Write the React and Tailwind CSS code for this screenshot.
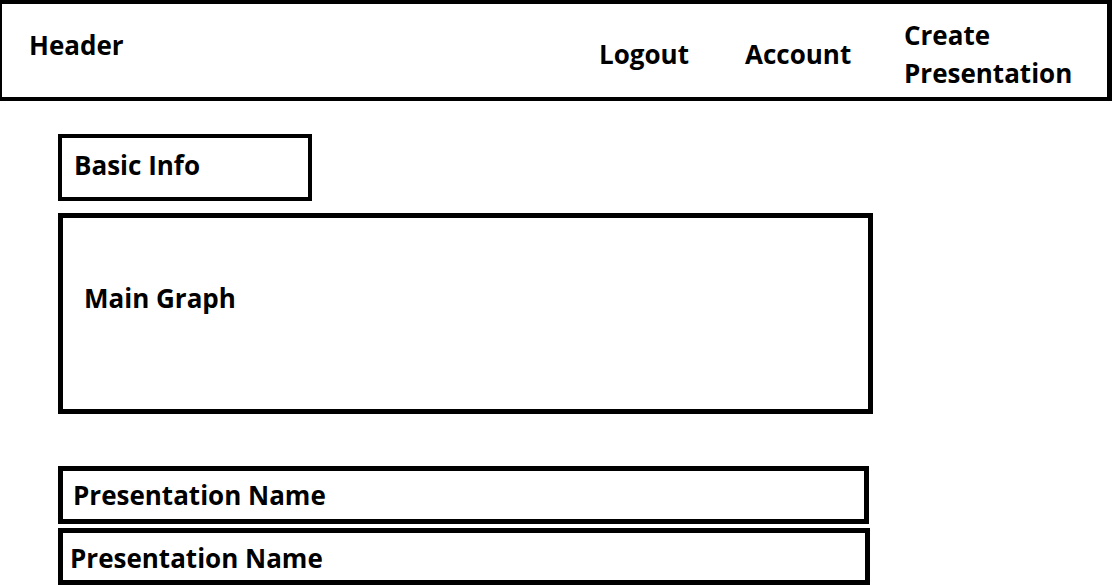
export default function App() {
  return (
    <div className="w-[1113px] h-[585px] overflow-hidden bg-white text-black font-bold text-[26px] leading-[38px] font-['Open_Sans',sans-serif]">
      {/* top bar */}
      <header className="flex items-start w-[1112px] h-[101px] border-[4px] border-l-[2px] border-r-[5px] border-black">
        <div className="w-[597px] pl-[27px] mt-[22px]">Header</div>
        <div className="w-[146px] mt-[31px]">Logout</div>
        <div className="w-[159px] mt-[31px]">Account</div>
        <div className="mt-[12px]">
          <div>Create</div>
          <div>Presentation</div>
        </div>
      </header>

      <main className="flex flex-col pl-[58px] pt-[33px]">
        <div className="w-[254px] h-[67px] border-[4px] border-black pl-[12px] pt-[8px]">Basic Info</div>

        <div className="mt-[12px] w-[815px] h-[201px] border-[5px] border-black pl-[21px] pt-[61px]">Main Graph</div>

        <div className="mt-[52px] w-[811px] h-[58px] border-[5px] border-black pl-[10px] pt-[5px]">Presentation Name</div>
        <div className="mt-[4px] w-[812px] h-[57px] border-[5px] border-black pl-[7px] pt-[6px]">Presentation Name</div>
      </main>
    </div>
  );
}
